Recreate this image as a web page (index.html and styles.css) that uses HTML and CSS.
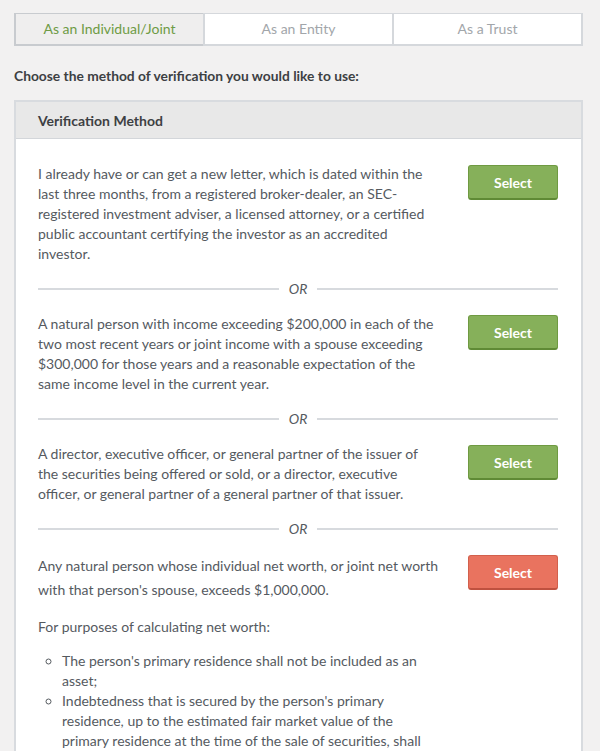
FILE: index.html
```html
<!DOCTYPE html>
<html>
<head>
<meta charset="utf-8">
<link rel="stylesheet" href="styles.css">
</head>
<body>
<div class="page">
  <div class="tabs">
    <div class="tab active">As an Individual/Joint</div>
    <div class="tab">As an Entity</div>
    <div class="tab">As a Trust</div>
  </div>
  <p class="prompt">Choose the method of verification you would like to use:</p>
  <div class="panel">
    <div class="panel-head">Verification Method</div>
    <div class="panel-body">
      <div class="item">
        <div class="item-text">I already have or can get a new letter, which is dated within the last three months, from a registered broker-dealer, an SEC-registered investment adviser, a licensed attorney, or a certified public accountant certifying the investor as an accredited investor.</div>
        <button class="btn green">Select</button>
      </div>
      <div class="or"><span>OR</span></div>
      <div class="item">
        <div class="item-text">A natural person with income exceeding $200,000 in each of the two most recent years or joint income with a spouse exceeding $300,000 for those years and a reasonable expectation of the same income level in the current year.</div>
        <button class="btn green">Select</button>
      </div>
      <div class="or"><span>OR</span></div>
      <div class="item">
        <div class="item-text">A director, executive officer, or general partner of the issuer of the securities being offered or sold, or a director, executive officer, or general partner of a general partner of that issuer.</div>
        <button class="btn green">Select</button>
      </div>
      <div class="or"><span>OR</span></div>
      <div class="item">
        <div class="item-text">
          <p class="tall">Any natural person whose individual net worth, or joint net worth with that person's spouse, exceeds $1,000,000.</p>
          <p class="sub">For purposes of calculating net worth:</p>
          <ul class="list">
            <li>The person's primary residence shall not be included as an asset;</li>
            <li>Indebtedness that is secured by the person's primary residence, up to the estimated fair market value of the primary residence at the time of the sale of securities, shall not be included as a liability;</li>
          </ul>
        </div>
        <button class="btn red">Select</button>
      </div>
    </div>
  </div>
</div>
</body>
</html>
```
FILE: styles.css
```css
html, body {
  margin: 0;
  padding: 0;
  background: #f2f1f1;
  font-family: Lato, "Liberation Sans", sans-serif;
  color: #555a5f;
}
.page {
  padding: 13px 17px 0 14px;
}
.tabs {
  display: flex;
  height: 33px;
  box-sizing: border-box;
}
.tab {
  flex: 1;
  display: flex;
  align-items: center;
  justify-content: center;
  background: #fff;
  border: 2px solid #d5d8dc;
  border-top-width: 1px;
  border-right-width: 0;
  font-size: 14px;
  line-height: 16px;
  padding-bottom: 1px;
  color: #a2a6aa;
}
.tab:last-child {
  border-right-width: 2px;
}
.tab.active {
  background: #efeeee;
  color: #6e9b45;
  border-color: #c8cbcf;
}
.prompt {
  margin: 21px 0 16px;
  font-size: 13.8px;
  font-weight: 700;
  color: #3d4043;
}
.panel {
  border: 2px solid #d8dbdf;
  border-bottom: 0;
  background: #fff;
}
.panel-head {
  background: #e8e8e8;
  border-bottom: 1px solid #d3d6da;
  height: 37px;
  box-sizing: border-box;
  padding: 10px 22px 0;
  font-size: 14px;
  font-weight: 700;
  color: #3d4043;
}
.panel-body {
  padding: 25px 23px 0 22px;
}
.item {
  display: flex;
  align-items: flex-start;
  justify-content: space-between;
}
.item-text {
  width: 401px;
  font-size: 14px;
  line-height: 20px;
  color: #555a5f;
}
.item-text p {
  margin: 0;
}
.item-text .tall {
  line-height: 24px;
}
.item-text .sub {
  margin-top: 15px;
}
.list {
  margin: 14px 0 0;
  padding-left: 24px;
  list-style: circle;
}
.btn {
  flex: none;
  width: 90px;
  height: 35px;
  margin-top: 1px;
  border-radius: 3px;
  font-family: inherit;
  font-size: 14px;
  font-weight: 700;
  color: #fff;
  cursor: pointer;
}
.btn.green {
  background: #86b05a;
  border: 1px solid #6f9a42;
  border-bottom: 2px solid #5f8a35;
}
.btn.red {
  background: #e9735f;
  border: 1px solid #d2604c;
  border-bottom: 2px solid #bf513f;
}
.or {
  display: flex;
  align-items: center;
  gap: 10px;
  margin: 12px 0 12px;
  font-size: 14px;
  font-style: italic;
  color: #555a5f;
  line-height: 26px;
}
.or::before, .or::after {
  content: "";
  flex: 1;
  height: 2px;
  background: #d7dade;
}
```
